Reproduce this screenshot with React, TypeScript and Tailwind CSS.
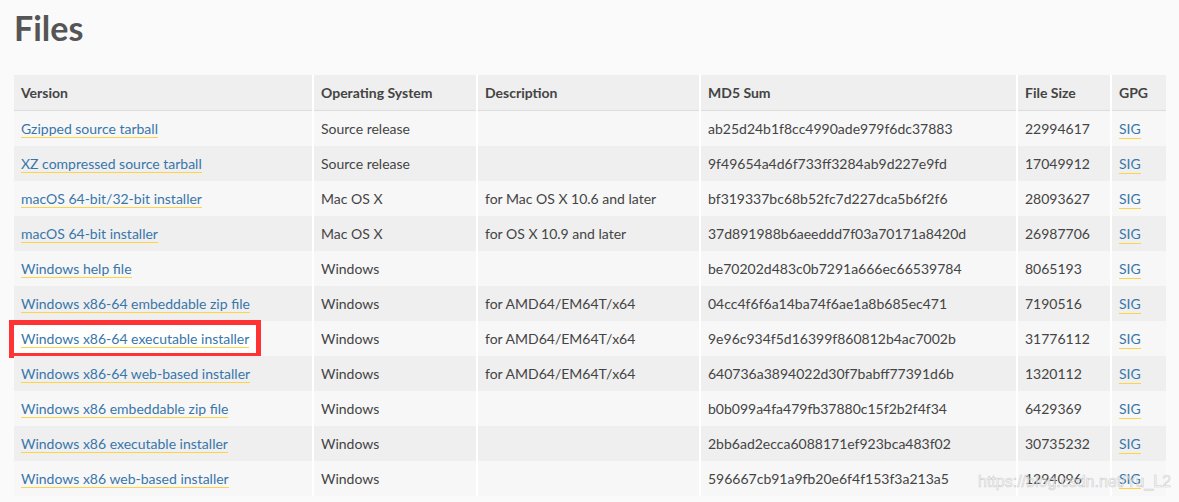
const rows = [
  ['Gzipped source tarball', 'Source release', '', 'ab25d24b1f8cc4990ade979f6dc37883', '22994617'],
  ['XZ compressed source tarball', 'Source release', '', '9f49654a4d6f733ff3284ab9d227e9fd', '17049912'],
  ['macOS 64-bit/32-bit installer', 'Mac OS X', 'for Mac OS X 10.6 and later', 'bf319337bc68b52fc7d227dca5b6f2f6', '28093627'],
  ['macOS 64-bit installer', 'Mac OS X', 'for OS X 10.9 and later', '37d891988b6aeeddd7f03a70171a8420d', '26987706'],
  ['Windows help file', 'Windows', '', 'be70202d483c0b7291a666ec66539784', '8065193'],
  ['Windows x86-64 embeddable zip file', 'Windows', 'for AMD64/EM64T/x64', '04cc4f6f6a14ba74f6ae1a8b685ec471', '7190516'],
  ['Windows x86-64 executable installer', 'Windows', 'for AMD64/EM64T/x64', '9e96c934f5d16399f860812b4ac7002b', '31776112'],
  ['Windows x86-64 web-based installer', 'Windows', 'for AMD64/EM64T/x64', '640736a3894022d30f7babff77391d6b', '1320112'],
  ['Windows x86 embeddable zip file', 'Windows', '', 'b0b099a4fa479fb37880c15f2b2f4f34', '6429369'],
  ['Windows x86 executable installer', 'Windows', '', '2bb6ad2ecca6088171ef923bca483f02', '30735232'],
  ['Windows x86 web-based installer', 'Windows', '', '596667cb91a9fb20e6f4f153f3a213a5', '1294096'],
];

const headers = ['Version', 'Operating System', 'Description', 'MD5 Sum', 'File Size', 'GPG'];

function Link({ children }: { children: string }) {
  return <span className="border-b border-[#ffd343] leading-[19px] text-[#3776ab]">{children}</span>;
}

export default function App() {
  return (
    <div
      className="relative h-[502px] w-[1179px] overflow-hidden bg-[#fafafa] text-[#444]"
      style={{ fontFamily: 'Lato, "Open Sans", sans-serif' }}
    >
      <h1 className="pl-[14px] pt-[8px] text-[34px] font-bold leading-[40px] text-[#555]">Files</h1>

      <div className="ml-[14px] mt-[27px] grid w-fit grid-cols-[298px_162px_221px_315px_92px_54px] gap-x-[2px] bg-white text-[14px]">
        {headers.map((h) => (
          <div key={h} className="flex h-[36px] items-center border-b border-[#ddd] bg-[#efefef] px-[7px] font-bold">
            {h}
          </div>
        ))}
        {rows.map((r, i) => {
          const bg = i % 2 === 0 ? 'bg-[#f7f7f7]' : 'bg-[#efefef]';
          const picked = r[0] === 'Windows x86-64 executable installer';
          return [
            <div key={`${i}-v`} className={`relative flex h-[35px] items-center px-[7px] ${bg}`}>
              {/* red highlight box from the screenshot */}
              {picked && (
                <div className="absolute left-[-5px] top-[-1px] h-[38px] w-[252px] border-[5px] border-[#ff3333] bg-white" />
              )}
              <span className="relative">
                <Link>{r[0]}</Link>
              </span>
            </div>,
            <div key={`${i}-os`} className={`flex h-[35px] items-center px-[7px] ${bg}`}>{r[1]}</div>,
            <div key={`${i}-d`} className={`flex h-[35px] items-center px-[7px] ${bg}`}>{r[2]}</div>,
            <div key={`${i}-m`} className={`flex h-[35px] items-center px-[7px] ${bg}`}>{r[3]}</div>,
            <div key={`${i}-s`} className={`flex h-[35px] items-center px-[7px] ${bg}`}>{r[4]}</div>,
            <div key={`${i}-g`} className={`flex h-[35px] items-center px-[7px] ${bg}`}>
              <Link>SIG</Link>
            </div>,
          ];
        })}
      </div>

      {/* watermark */}
      <div
        className="absolute left-[978px] top-[472px] text-[16px] leading-[20px] text-white/60"
        style={{ fontFamily: '"Liberation Sans", Arial, sans-serif', WebkitTextStroke: '0.6px rgba(160,160,160,0.5)' }}
      >
        https://blog.csdn.net/Yu_L2
      </div>
    </div>
  );
}
